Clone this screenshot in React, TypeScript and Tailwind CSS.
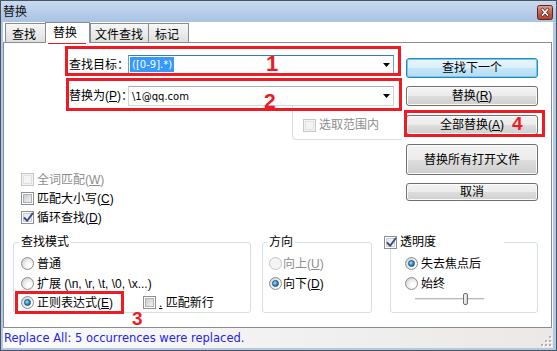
import React from "react";

function Check({ checked = false, disabled = false }: { checked?: boolean; disabled?: boolean }) {
  return (
    <span
      className={`flex h-[13px] w-[13px] shrink-0 items-center justify-center border ${
        disabled ? "border-[#c6c6c6] bg-[#f4f4f4]" : "border-[#8e8f8f] bg-white"
      }`}
    >
      <span
        className={`relative flex h-[9px] w-[9px] items-center justify-center border ${
          disabled
            ? "border-[#e0e0e0] bg-[#f4f4f4]"
            : checked
            ? "border-[#c9ccd1] bg-gradient-to-br from-[#e4e6e9] to-[#fbfbfb]"
            : "border-[#aeb2b7] bg-gradient-to-br from-[#c9ccd0] to-[#f2f2f3]"
        }`}
      >
        {checked && (
          <svg width="11" height="11" viewBox="0 0 11 11" className="absolute left-[-1px] top-[-2px]">
            <path d="M1.5 6 L4.2 8.8 L9.5 1.5" fill="none" stroke="#34478a" strokeWidth="1.9" strokeLinecap="round" strokeLinejoin="round" />
          </svg>
        )}
      </span>
    </span>
  );
}

function Radio({ on = false, disabled = false }: { on?: boolean; disabled?: boolean }) {
  return (
    <span
      className={`flex h-[13px] w-[13px] shrink-0 items-center justify-center rounded-full border ${
        disabled
          ? "border-[#c4c4c4] bg-[#f4f4f4]"
          : "border-[#8e8f8f] bg-[radial-gradient(circle_at_65%_65%,#ffffff_20%,#e6e6e6_55%,#c4c4c4_100%)]"
      }`}
    >
      {on && (
        <span className="h-[7px] w-[7px] rounded-full border border-[#134a7c] bg-[radial-gradient(circle_at_35%_35%,#a6e4ff_0%,#3a9ad8_45%,#0f5a98_100%)]" />
      )}
    </span>
  );
}

function Btn({ children, cls, def = false }: { children: React.ReactNode; cls: string; def?: boolean }) {
  return (
    <div
      className={`flex w-[132px] items-center justify-center rounded-[3px] border ${cls} ${
        def
          ? "border-[#3c7fb1] bg-[linear-gradient(#e9f5fc_0%,#daf0fc_50%,#c4e6f8_51%,#b4dcf3_100%)] shadow-[inset_0_0_0_1px_#5fd2fa]"
          : "border-[#707070] bg-[linear-gradient(#f3f3f3_0%,#ebebeb_50%,#dddddd_51%,#cfcfcf_100%)] shadow-[inset_0_0_0_1px_#fbfbfb]"
      }`}
    >
      <span className="leading-[14px]">{children}</span>
    </div>
  );
}

function Arrow() {
  return (
    <svg width="7" height="4" viewBox="0 0 7 4" className="shrink-0">
      <path d="M0 0 H7 L3.5 4 Z" fill="#000" />
    </svg>
  );
}

export default function App() {
  return (
    <div className="relative h-[351px] w-[557px] overflow-hidden bg-white font-['Liberation_Sans','Noto_Sans_CJK_SC',sans-serif] text-[12px] leading-[14px] text-black">
      <div className="flex h-full w-full flex-col border border-[#4a5460] bg-[#b1c9e6]">
        {/* title bar */}
        <div className="flex h-[21px] shrink-0 items-start justify-between bg-gradient-to-b from-[#c8daef] to-[#a8c3e3] pl-[2px] pr-[3px]">
          <span className="mt-[4px] text-[12px] leading-[14px] text-[#111]">替换</span>
          <svg width="16" height="15" viewBox="0 0 16 15" className="mt-[4px]">
            <defs>
              <linearGradient id="cg" x1="0" y1="0" x2="0" y2="1">
                <stop offset="0" stopColor="#e0a397" />
                <stop offset="0.5" stopColor="#c8614f" />
                <stop offset="1" stopColor="#b2402f" />
              </linearGradient>
            </defs>
            <rect x="0.5" y="0.5" width="15" height="14" rx="2" fill="url(#cg)" stroke="#5e241b" />
            <path d="M5.5 4.5 L10.5 10 M10.5 4.5 L5.5 10" stroke="#4a1d17" strokeWidth="3" strokeLinecap="square" />
            <path d="M5.5 4.5 L10.5 10 M10.5 4.5 L5.5 10" stroke="#fff" strokeWidth="1.6" strokeLinecap="square" />
          </svg>
        </div>

        {/* body */}
        <div className="ml-[2px] mr-[3px] flex h-[326px] flex-col bg-white">
          {/* tabs */}
          <div className="flex h-[20px] items-end pl-[2px]">
            <div className="h-[19px] w-[41px] border border-b-0 border-[#898c95] bg-gradient-to-b from-[#f7f7f7] to-[#dfdfdf] pl-[6px] pt-[4px]">查找</div>
            <div className="relative z-10 -mb-[1px] -ml-[1px] h-[21px] w-[45px] border border-b-0 border-[#898c95] bg-white pl-[7px] pt-[3px]">替换</div>
            <div className="h-[19px] w-[59px] border border-b-0 border-[#898c95] bg-gradient-to-b from-[#f7f7f7] to-[#dfdfdf] pl-[4px] pt-[4px]">文件查找</div>
            <div className="-ml-[1px] h-[19px] w-[41px] border border-b-0 border-[#898c95] bg-gradient-to-b from-[#f7f7f7] to-[#dfdfdf] pl-[6px] pt-[4px]">标记</div>
          </div>

          {/* panel */}
          <div className="mr-[1px] flex h-[286px] flex-col border border-[#898c95] bg-white">
            <div className="flex">
              {/* left column */}
              <div className="flex w-[402px] flex-col">
                <div className="mt-[12px] flex h-[19px] items-center pl-[65px]">
                  <span className="w-[59px] whitespace-nowrap">查找目标：</span>
                  <div className="flex h-[19px] w-[266px] items-center justify-between border border-[#6d9fcf] border-t-[#3d7bad] bg-white pr-[3px]">
                    <span className="ml-[1px] h-[15px] bg-[#3399ff] px-[2px] font-['DejaVu_Sans',sans-serif] text-[10px] leading-[15px] text-white">
                      ([0-9].*)
                    </span>
                    <Arrow />
                  </div>
                </div>
                <div className="mt-[12px] flex h-[20px] items-center pl-[65px]">
                  <span className="w-[59px] whitespace-nowrap">
                    替换为(<u>P</u>)：
                  </span>
                  <div className="flex h-[20px] w-[266px] items-center justify-between border border-[#d0d5db] border-t-[#abadb3] bg-white pr-[3px]">
                    <span className="pl-[3px] font-['DejaVu_Sans',sans-serif] text-[10px] leading-[15px]">{"\\1@qq.com"}</span>
                    <Arrow />
                  </div>
                </div>
                <div className="ml-[288px] h-[34px] w-[110px] rounded-bl-[4px] border-b border-l border-[#d5dfe5] pl-[10px] pt-[12px]">
                  <div className="flex items-center gap-[3px] text-[#8d8d8d]">
                    <Check disabled />
                    <span>选取范围内</span>
                  </div>
                </div>
                <div className="mt-[30px] flex flex-col pl-[17px]">
                  <div className="flex h-[19px] items-center gap-[3px] text-[#8d8d8d]">
                    <Check disabled />
                    <span>
                      全词匹配(<u>W</u>)
                    </span>
                  </div>
                  <div className="flex h-[19px] items-center gap-[3px]">
                    <Check />
                    <span>
                      匹配大小写(<u>C</u>)
                    </span>
                  </div>
                  <div className="flex h-[19px] items-center gap-[3px]">
                    <Check checked />
                    <span>
                      循环查找(<u>D</u>)
                    </span>
                  </div>
                </div>
              </div>

              {/* right column */}
              <div className="flex flex-col pt-[15px]">
                <Btn def cls="h-[20px]">查找下一个</Btn>
                <Btn cls="mt-[8px] h-[20px]">
                  替换(<u>R</u>)
                </Btn>
                <Btn cls="mt-[9px] h-[20px]">
                  全部替换(<u>A</u>)
                </Btn>
                <Btn cls="mt-[9px] h-[31px]">替换所有打开文件</Btn>
                <Btn cls="mt-[8px] h-[18px]">取消</Btn>
              </div>
            </div>

            {/* groups */}
            <div className="mt-[8px] flex pl-[9px]">
              <fieldset className="h-[78px] w-[238px] rounded-[3px] border border-[#d5dfe5]">
                <legend className="ml-[5px] px-[2px] leading-[14px]">查找模式</legend>
                <div className="flex flex-col pl-[7px] pt-[4px]">
                  <div className="flex h-[21px] items-center gap-[3px]">
                    <Radio />
                    <span>普通</span>
                  </div>
                  <div className="flex h-[19px] items-center gap-[3px]">
                    <Radio />
                    <span>{"扩展 (\\n, \\r, \\t, \\0, \\x...)"}</span>
                  </div>
                  <div className="flex h-[19px] items-center">
                    <Radio on />
                    <span className="ml-[3px] w-[106px]">
                      正则表达式(<u>E</u>)
                    </span>
                    <Check />
                    <span className="ml-[3px]">
                      <u>.</u> 匹配新行
                    </span>
                  </div>
                </div>
              </fieldset>

              <fieldset className="ml-[11px] h-[78px] w-[110px] rounded-[3px] border border-[#d5dfe5]">
                <legend className="ml-[4px] px-[2px] leading-[14px]">方向</legend>
                <div className="flex flex-col pl-[6px] pt-[4px]">
                  <div className="flex h-[21px] items-center gap-[1px] text-[#8d8d8d]">
                    <Radio disabled />
                    <span>
                      向上(<u>U</u>)
                    </span>
                  </div>
                  <div className="flex h-[19px] items-center gap-[1px]">
                    <Radio on />
                    <span>
                      向下(<u>D</u>)
                    </span>
                  </div>
                </div>
              </fieldset>

              <fieldset className="ml-[18px] h-[78px] w-[148px] rounded-[3px] border border-[#d5dfe5]">
                <legend className="-ml-[7px] w-[120px] leading-[14px]">
                  <span className="flex items-center gap-[3px]">
                    <Check checked />
                    <span>透明度</span>
                  </span>
                </legend>
                <div className="flex flex-col pl-[14px] pt-[4px]">
                  <div className="flex h-[21px] items-center gap-[3px]">
                    <Radio on />
                    <span>失去焦点后</span>
                  </div>
                  <div className="flex h-[19px] items-center gap-[3px]">
                    <Radio />
                    <span>始终</span>
                  </div>
                  <div className="relative ml-[10px] h-[13px] w-[69px]">
                    <div className="absolute left-0 right-0 top-[5px] h-[3px] border-b border-t border-b-white border-t-[#b9b9b9] bg-[#e6e6e6]" />
                    <div className="absolute left-[48px] top-[0px] h-[12px] w-[5px] rounded-[2px] border border-[#6f6f6f] bg-gradient-to-r from-[#f4f4f4] to-[#d6d6d6]" />
                  </div>
                </div>
              </fieldset>
            </div>
          </div>

          {/* status bar */}
          <div className="relative flex h-[20px] items-center bg-gradient-to-r from-[#fbfbfb] to-[#ebe8e5] pl-[1px]">
            <span className="font-['DejaVu_Sans',sans-serif] text-[11.5px] leading-[14px] text-[#2323ee]">
              Replace All: 5 occurrences were replaced.
            </span>
            <svg width="11" height="11" viewBox="0 0 11 11" className="absolute bottom-[1px] right-[1px]">
              {[
                [8, 0],
                [8, 4],
                [4, 4],
                [8, 8],
                [4, 8],
                [0, 8],
              ].map(([x, y], i) => (
                <g key={i}>
                  <rect x={x + 1} y={y + 1} width="2" height="2" fill="#ffffff" />
                  <rect x={x} y={y} width="2" height="2" fill="#b4b0ac" />
                </g>
              ))}
            </svg>
          </div>
        </div>
      </div>

      {/* red annotations */}
      <div className="absolute left-[48px] top-[22px] h-[22px] w-[38px] border-[3px] border-[#ed1c24]" />
      <div className="absolute left-[65px] top-[46px] h-[30px] w-[336px] border-[3px] border-[#ed1c24]" />
      <div className="absolute left-[66px] top-[78px] h-[33px] w-[336px] border-[3px] border-[#ed1c24]" />
      <div className="absolute left-[15px] top-[291px] h-[23px] w-[109px] border-[3px] border-[#ed1c24]" />
      <div className="absolute left-[404px] top-[110px] h-[27px] w-[141px] border-[3px] border-[#ed1c24]" />
      <span className="absolute left-[266px] top-[53px] font-['Liberation_Sans',sans-serif] text-[22px] font-bold leading-[22px] text-[#ed1c24]">1</span>
      <span className="absolute left-[264px] top-[90px] font-['Liberation_Sans',sans-serif] text-[21px] font-bold leading-[21px] text-[#ed1c24]">2</span>
      <span className="absolute left-[132px] top-[309px] font-['Liberation_Sans',sans-serif] text-[19px] font-bold leading-[19px] text-[#ed1c24]">3</span>
      <span className="absolute left-[512px] top-[114px] font-['Liberation_Sans',sans-serif] text-[19px] font-bold leading-[19px] text-[#ed1c24]">4</span>
    </div>
  );
}
